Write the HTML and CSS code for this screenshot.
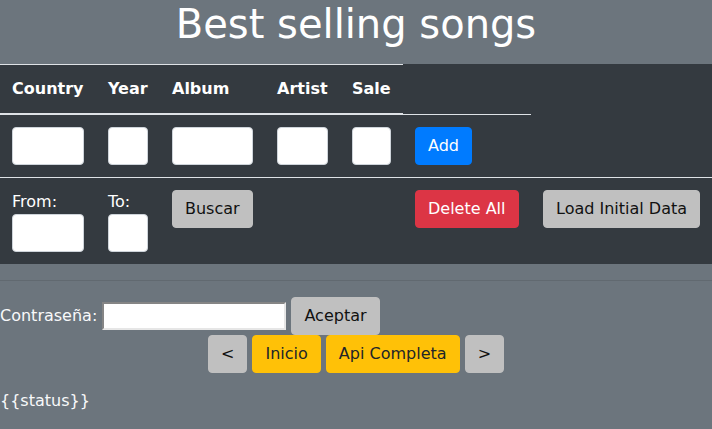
FILE: index.html
```html
<!DOCTYPE html>
<html lang="es">
<head>
<meta charset="utf-8">
<title>Best selling songs</title>
<link rel="stylesheet" href="styles.css">
</head>
<body>
<h1 class="title">Best selling songs</h1>
<table class="songs">
  <colgroup>
    <col class="c-country"><col class="c-year"><col class="c-album"><col class="c-artist"><col class="c-sale"><col class="c-action"><col class="c-load">
  </colgroup>
  <thead>
    <tr><th>Country</th><th>Year</th><th>Album</th><th>Artist</th><th>Sale</th></tr>
  </thead>
  <tbody>
    <tr>
      <td><input class="field" type="text"></td>
      <td><input class="field" type="text"></td>
      <td><input class="field" type="text"></td>
      <td><input class="field" type="text"></td>
      <td><input class="field" type="text"></td>
      <td><button class="btn btn-primary">Add</button></td>
    </tr>
    <tr>
      <td><label class="lbl">From:</label><input class="field" type="text"></td>
      <td><label class="lbl">To:</label><input class="field" type="text"></td>
      <td><button class="btn btn-gray">Buscar</button></td>
      <td></td>
      <td></td>
      <td><button class="btn btn-danger">Delete All</button></td>
      <td><button class="btn btn-gray">Load Initial Data</button></td>
    </tr>
  </tbody>
</table>
<hr class="sep">
<div class="login">Contraseña: <input class="pass" type="password"> <button class="btn btn-gray">Aceptar</button></div>
<div class="pager"><button class="btn btn-gray">&lt;</button> <button class="btn btn-warning">Inicio</button> <button class="btn btn-warning">Api Completa</button> <button class="btn btn-gray">&gt;</button></div>
<p class="status">{{status}}</p>
</body>
</html>
```
FILE: styles.css
```css
html, body {
  margin: 0;
  padding: 0;
}
body {
  background: #6c757d;
  color: #f8f9fa;
  font-family: "DejaVu Sans", sans-serif;
  font-size: 16px;
  line-height: 1.5;
}
.title {
  margin: 0 0 16px;
  font-size: 40px;
  font-weight: 500;
  line-height: 1.2;
  text-align: center;
  color: #fff;
}
.songs {
  width: 100%;
  table-layout: fixed;
  border-collapse: collapse;
  background: #343a40;
  color: #fff;
  margin-bottom: 16px;
}
.c-country { width: 96px; }
.c-year { width: 64px; }
.c-album { width: 105px; }
.c-artist { width: 75px; }
.c-sale { width: 63px; }
.c-action { width: 128px; }
.songs th,
.songs td {
  padding: 12px;
  text-align: left;
  vertical-align: top;
  border-top: 1px solid #dee2e6;
  white-space: nowrap;
}
.songs thead th {
  vertical-align: bottom;
  border-bottom: 2px solid #dee2e6;
  font-weight: bold;
}
.lbl {
  display: block;
  line-height: 24px;
}
.field {
  display: block;
  box-sizing: border-box;
  width: 100%;
  height: 38px;
  margin: 0;
  padding: 6px 12px;
  font: inherit;
  background: #fff;
  border: 1px solid #ced4da;
  border-radius: 4px;
}
.btn {
  display: inline-block;
  margin: 0;
  padding: 6px 12px;
  font-family: "DejaVu Sans", sans-serif;
  font-size: 16px;
  line-height: 24px;
  white-space: nowrap;
  border: 1px solid transparent;
  border-radius: 4px;
  vertical-align: baseline;
  cursor: pointer;
}
.btn-primary { background: #007bff; border-color: #007bff; color: #fff; }
.btn-danger { background: #dc3545; border-color: #dc3545; color: #fff; }
.btn-gray { background: #c0c0c0; border-color: #c0c0c0; color: #111; }
.btn-warning { background: #ffc107; border-color: #ffc107; color: #212529; }
.sep {
  margin: 16px 0;
  border: 0;
  border-top: 1px solid rgba(0, 0, 0, 0.1);
}
.login {
  line-height: 24px;
}
.pass {
  box-sizing: border-box;
  width: 184px;
  height: 28px;
  margin: 0;
  padding: 1px 2px;
  font: inherit;
  line-height: 22px;
  background: #fff;
  border-width: 2px;
  border-style: solid;
  border-color: #858585 #e6e6e6 #e6e6e6 #858585;
}
.pager {
  text-align: center;
  line-height: 24px;
}
.status {
  margin: 16px 0 0;
}
```
